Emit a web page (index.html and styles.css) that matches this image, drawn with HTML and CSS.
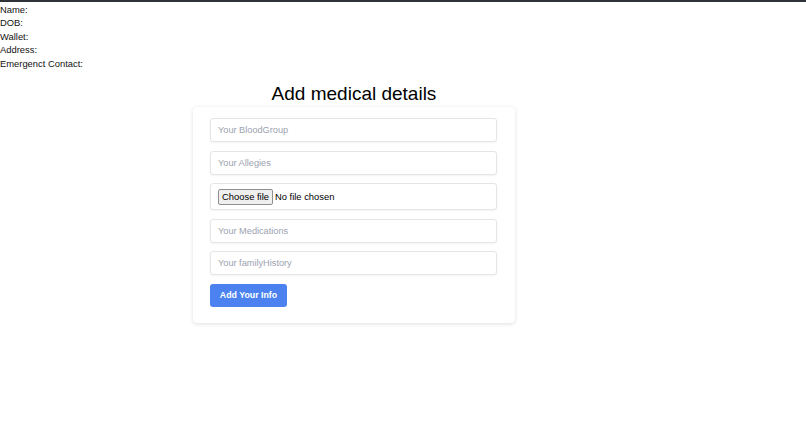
FILE: index.html
```html
<!DOCTYPE html>
<html>
<head>
<meta charset="utf-8">
<link rel="stylesheet" href="styles.css">
</head>
<body>
<div class="topbar"></div>
<div class="profile">
  <div class="line">Name:</div>
  <div class="line">DOB:</div>
  <div class="line">Wallet:</div>
  <div class="line">Address:</div>
  <div class="line">Emergenct Contact:</div>
</div>
<div class="main">
  <h1 class="title">Add medical details</h1>
  <form class="card">
    <input class="field" type="text" placeholder="Your BloodGroup">
    <input class="field" type="text" placeholder="Your Allegies">
    <div class="field file">
      <span class="choose">Choose file</span>
      <span class="nofile">No file chosen</span>
    </div>
    <input class="field" type="text" placeholder="Your Medications">
    <input class="field" type="text" placeholder="Your familyHistory">
    <div class="actions">
      <button class="submit" type="button">Add Your Info</button>
    </div>
  </form>
</div>
</body>
</html>
```

FILE: styles.css
```css
* { box-sizing: border-box; }
html, body { margin: 0; padding: 0; background: #fff; }
body {
  font-family: "Liberation Sans", Arial, sans-serif;
  color: #000;
  width: 806px;
  height: 446px;
  overflow: hidden;
}
.topbar {
  height: 2px;
  background: #2f3236;
}
.profile {
  padding-top: 1px;
  font-size: 9.4px;
  line-height: 13.4px;
  color: #111;
}
.main {
  width: 708px;
  display: flex;
  flex-direction: column;
  align-items: center;
}
.title {
  margin: 10px 0 0;
  font-size: 19px;
  font-weight: 400;
  line-height: 27px;
}
.card {
  width: 322px;
  padding: 11px 18px 16.5px 17px;
  background: #fff;
  border-radius: 4px;
  box-shadow: 0 1px 4px rgba(0, 0, 0, 0.12), 0 0 1px rgba(0, 0, 0, 0.06);
  display: flex;
  flex-direction: column;
  gap: 8.5px;
}
.field {
  width: 287px;
  height: 24px;
  margin: 0;
  padding: 0 7px;
  border: 1px solid #e3e5e8;
  border-radius: 3px;
  box-shadow: 0 1px 2px rgba(0, 0, 0, 0.05);
  font-family: "Liberation Sans", Arial, sans-serif;
  font-size: 9.2px;
  color: #111;
  background: #fff;
  outline: none;
}
.field::placeholder { color: #9ca3af; }
.file {
  height: 27px;
  display: flex;
  align-items: center;
  gap: 2px;
  padding: 0 7px;
}
.choose {
  display: inline-block;
  width: 55px;
  height: 16px;
  line-height: 14px;
  text-align: center;
  font-size: 9.4px;
  color: #000;
  background: #efefef;
  border: 1px solid #8f8f8f;
  border-radius: 2px;
}
.nofile {
  font-size: 9.4px;
  color: #000;
}
.actions { display: flex; }
.submit {
  height: 23px;
  width: 77px;
  padding: 0;
  border: none;
  border-radius: 3px;
  background: #4b82f0;
  color: #fff;
  font-family: "Liberation Sans", Arial, sans-serif;
  font-size: 8.8px;
  font-weight: 700;
}
```
